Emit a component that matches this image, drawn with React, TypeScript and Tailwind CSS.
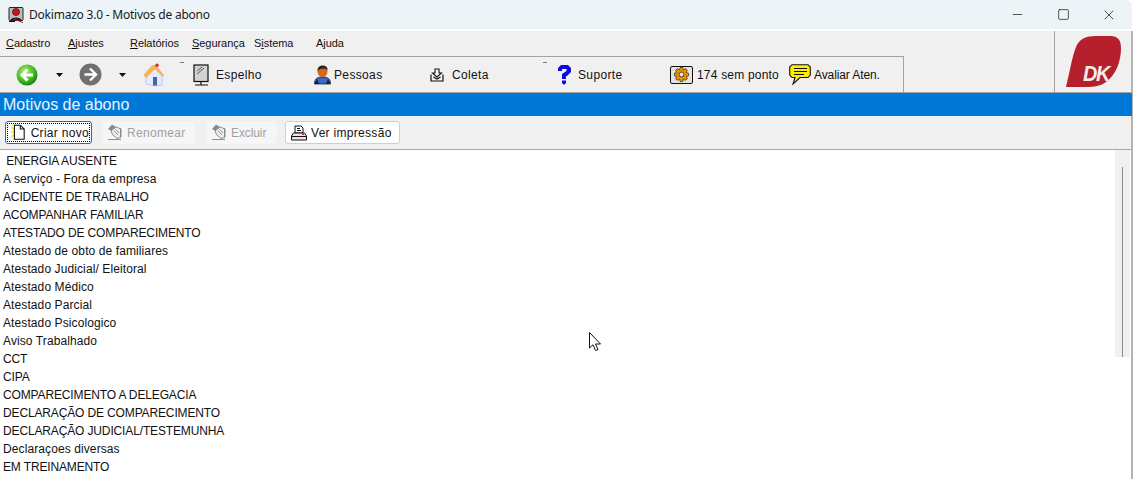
import { ReactNode } from "react";
import { Minus, Square, X } from "lucide-react";

const rows = [
  " ENERGIA AUSENTE",
  "A serviço - Fora da empresa",
  "ACIDENTE DE TRABALHO",
  "ACOMPANHAR FAMILIAR",
  "ATESTADO DE COMPARECIMENTO",
  "Atestado de obto de familiares",
  "Atestado Judicial/ Eleitoral",
  "Atestado Médico",
  "Atestado Parcial",
  "Atestado Psicologico",
  "Aviso Trabalhado",
  "CCT",
  "CIPA",
  "COMPARECIMENTO A DELEGACIA",
  "DECLARAÇÃO DE COMPARECIMENTO",
  "DECLARAÇÃO JUDICIAL/TESTEMUNHA",
  "Declaraçoes diversas",
  "EM TREINAMENTO",
];

const BackIcon = () => (
  <svg width="22" height="22" viewBox="0 0 22 22">
    <defs>
      <radialGradient id="grn" cx="40%" cy="35%" r="70%">
        <stop offset="0%" stopColor="#b4f07a" />
        <stop offset="60%" stopColor="#45bd20" />
        <stop offset="100%" stopColor="#127a10" />
      </radialGradient>
    </defs>
    <circle cx="11" cy="11" r="10.5" fill="url(#grn)" />
    <path d="M11.5 5.5 L6 11 L11.5 16.5 M6.5 11 H17" fill="none" stroke="#fff" strokeWidth="3" />
  </svg>
);

const ForwardIcon = () => (
  <svg width="23" height="23" viewBox="0 0 23 23">
    <circle cx="11.5" cy="11.5" r="11" fill="#717171" />
    <path d="M11 5.5 L17 11.5 L11 17.5 M17 11.5 H5.5" fill="none" stroke="#fff" strokeWidth="2.4" />
  </svg>
);

const Caret = () => (
  <svg width="7" height="4" viewBox="0 0 7 4">
    <path d="M0 0 H7 L3.5 4 Z" fill="#111" />
  </svg>
);

const HomeIcon = () => (
  <svg width="22" height="24" viewBox="0 0 22 24">
    <path d="M3 12 L11 5 L19 12 V22 L11 23 L3 21 Z" fill="#e4ecfb" stroke="#a9c3ea" strokeWidth="0.8" />
    <path d="M10 14 H14 V22.5 H10 Z" fill="#3f66a8" />
    <path d="M0.5 12 L9 2.5 L13 2 L21.5 13 L19.5 13.5 L12 6 L3 15 Z" fill="#f7b056" />
    <circle cx="14" cy="2.2" r="1.8" fill="#c8372c" />
  </svg>
);

const MirrorIcon = () => (
  <svg width="17" height="22" viewBox="0 0 17 22">
    <rect x="1" y="1" width="14" height="16.5" fill="#d2d2d2" stroke="#111" strokeWidth="1.2" />
    <path d="M4 7 L9 3 M4 10 L11 4" stroke="#555" strokeWidth="1" />
    <path d="M8 18 V20.5 M2 21 H15" stroke="#111" strokeWidth="1.2" />
  </svg>
);

const PersonIcon = () => (
  <svg width="17" height="21" viewBox="0 0 17 21">
    <path d="M0.5 20 C0.5 14 4 13 8.5 13 C13 13 16.5 14 16.5 20 Z" fill="#3768c8" stroke="#10213f" strokeWidth="0.8" />
    <ellipse cx="8.5" cy="7.5" rx="5" ry="5.5" fill="#d9641e" />
    <path d="M3.5 7 C3 0 14 0 13.5 6 C10 4 7 4 3.5 7 Z" fill="#2a2522" />
    <path d="M3 15 L0.5 20 H5 Z M14 15 L16.5 20 H12 Z" fill="#10213f" />
  </svg>
);

const InboxIcon = () => (
  <svg width="14" height="14" viewBox="0 0 14 14">
    <path d="M5 1 H9 V5 H11.5 L7 9 L2.5 5 H5 Z" fill="#fff" stroke="#111" strokeWidth="1.1" />
    <path d="M1 6.5 V13 H13 V6.5" fill="none" stroke="#111" strokeWidth="1.2" />
    <path d="M3.5 9 L7 11 L10.5 9" fill="none" stroke="#111" strokeWidth="1.2" />
  </svg>
);

const QuestionIcon = () => (
  <svg width="15" height="21" viewBox="0 0 15 21">
    <path
      d="M1 4 L4 1 H11 L14 4 V8 L10 12 H9 V15 H5 V10 L9.5 7 V5 H5 V7 H1 Z M5 16.5 H9 V19 L7.5 20.5 H6.5 L5 19 Z"
      fill="#0a0adf"
    />
  </svg>
);

const GearIcon = () => (
  <div className="w-[23px] h-[18px] border border-[#111] rounded-[2px] bg-[#e4e4e4] flex items-center justify-center">
    <svg width="15" height="15" viewBox="0 0 16 16">
      <path
        d="M6.5 0.5 H9.5 L10 3 L12.5 1.8 L14.2 3.5 L13 6 L15.5 6.5 V9.5 L13 10 L14.2 12.5 L12.5 14.2 L10 13 L9.5 15.5 H6.5 L6 13 L3.5 14.2 L1.8 12.5 L3 10 L0.5 9.5 V6.5 L3 6 L1.8 3.5 L3.5 1.8 L6 3 Z"
        fill="#e8930c"
        stroke="#4a3000"
        strokeWidth="0.8"
      />
      <circle cx="8" cy="8" r="2.6" fill="#e4e4e4" stroke="#4a3000" strokeWidth="0.9" />
    </svg>
  </div>
);

const BalloonIcon = () => (
  <svg width="22" height="21" viewBox="0 0 22 21">
    <path
      d="M3 0.7 H19 L21.3 3 V11 L19 13.5 H11 L4 20 L6 13.5 H3 L0.7 11 V3 Z"
      fill="#ffee00"
      stroke="#111"
      strokeWidth="1.1"
    />
    <path d="M5 4.5 H18 M5 7.5 H18 M5 10.5 H15" stroke="#111" strokeWidth="1" />
  </svg>
);

const NewIcon = () => (
  <svg width="15" height="17" viewBox="0 0 15 17">
    <path d="M0 3 L3 5 M0 13 L3 11 M0 8 H3 M3 0 L5 3 M3 16 L5 13" stroke="#f5ee00" strokeWidth="1.6" />
    <path d="M3.5 1 H9.5 L13.5 5 V15.5 H3.5 Z" fill="#fff" stroke="#111" strokeWidth="1.1" />
    <path d="M9.5 1 V5 H13.5" fill="none" stroke="#111" strokeWidth="1.1" />
  </svg>
);

const HandIcon = () => (
  <svg width="16" height="17" viewBox="0 0 16 17">
    <path d="M1 5 L5 0.5 L9 3 L5.5 8 Z" fill="#8c8c8c" />
    <path d="M4.5 6.5 L9 3 L14 5 V13 L10 14.5 L5 10 Z" fill="#efefef" stroke="#8c8c8c" strokeWidth="1" />
    <path d="M7 7 L11 11 M9 5.5 L12 9 M13.5 4 V14" stroke="#8c8c8c" strokeWidth="1" />
    <path d="M1 15.5 H14" stroke="#8c8c8c" strokeWidth="1" />
  </svg>
);

const PrinterIcon = () => (
  <svg width="16" height="16" viewBox="0 0 16 16">
    <path d="M4 1 H10 L12 3 V8 H4 Z" fill="#fff" stroke="#111" strokeWidth="1" />
    <path d="M6 3.5 H9 M6 5.5 H10" stroke="#111" strokeWidth="1" />
    <path d="M2.5 8 H13.5 L15.5 11 V15 H0.5 V11 Z" fill="#e6e6e6" stroke="#111" strokeWidth="1" />
    <path d="M1 11.5 H15" stroke="#111" strokeWidth="1" />
    <path d="M11 9.5 H13" stroke="#d02020" strokeWidth="1" />
  </svg>
);

const ToolItem = ({ icon, label, width, gap }: { icon: ReactNode; label?: string; width: string; gap: string }) => (
  <div className={`flex items-center shrink-0 ${width} ${gap}`}>
    {icon}
    {label && <span className="whitespace-nowrap">{label}</span>}
  </div>
);

const Grip = ({ width }: { width: string }) => (
  <div className={`shrink-0 self-stretch ${width} flex justify-end`}>
    <div className="w-[4px] h-px bg-[#777] mt-[5px]" />
  </div>
);

const Btn = ({
  icon,
  label,
  width,
  disabled,
  focused,
}: {
  icon: ReactNode;
  label: string;
  width: string;
  disabled?: boolean;
  focused?: boolean;
}) => {
  if (focused) {
    return (
      <div className={`h-[23px] ${width} shrink-0 rounded-[3px] border border-[#0078d7] bg-white p-px`}>
        <div className="h-full border border-dotted border-black flex items-center gap-[5px] pl-[3px] text-[#111] whitespace-nowrap">
          {icon}
          <span>{label}</span>
        </div>
      </div>
    );
  }
  return (
    <div
      className={`h-[23px] ${width} shrink-0 rounded-[3px] border flex items-center whitespace-nowrap ${
        disabled
          ? "gap-[4px] pl-[4px] border-[#f5f5f5] bg-[#f6f6f6] text-[#a0a0a0]"
          : "gap-[4px] pl-[5px] border-[#cfcfcf] bg-white text-[#111]"
      }`}
    >
      {icon}
      <span>{label}</span>
    </div>
  );
};

export default function App() {
  return (
    <div className="w-[1134px] h-[479px] overflow-hidden bg-white flex flex-col font-['Liberation_Sans',Arial,sans-serif] text-[12px] text-[#111] tracking-[0.1px]">
      {/* barra de titulo */}
      <div className="h-[29px] w-[1132px] shrink-0 bg-[#edf4f8] rounded-tr-[6px] flex items-center pl-[8px]">
        <svg width="16" height="16" viewBox="0 0 16 16" className="mr-[5px]">
          <rect x="1" y="0.5" width="14" height="13" rx="1" fill="#bdbdbd" stroke="#222" />
          <circle cx="8" cy="5" r="3.5" fill="#e01010" stroke="#111" strokeWidth="0.7" />
          <path d="M2.5 13 C3 9.5 13 9.5 13.5 13 Z" fill="#222" />
          <path d="M6 12 L15 15.5" stroke="#d01010" strokeWidth="1" />
          <path d="M1 14.5 H7" stroke="#111" strokeWidth="1" />
        </svg>
        <span className="font-['Noto_Sans',sans-serif] text-[12px] tracking-[-0.22px] text-[#1a1a1a]">
          Dokimazo 3.0 - Motivos de abono
        </span>
        <div className="ml-auto flex items-center text-[#222]">
          <div className="w-[46px] flex justify-center"><Minus size={15} strokeWidth={1.2} /></div>
          <div className="w-[46px] flex justify-center"><Square size={13} strokeWidth={1.4} /></div>
          <div className="w-[46px] flex justify-center"><X size={16} strokeWidth={1.2} /></div>
        </div>
      </div>
      <div className="h-[2px] shrink-0 bg-white" />

      <div className="flex-1 min-h-0 w-[1133px] flex flex-col border-r-2 border-[#b4b4b4]">
        {/* menu e barra de ferramentas */}
        <div className="flex shrink-0 h-[62px] bg-[#f0f0f0] border-b border-[#a3a3a3]">
          <div className="flex-1 flex flex-col min-w-0">
            <div className="h-[25px] flex items-center pl-[6px] text-[11px] tracking-[-0.05px]">
              <div className="w-[62px]"><u>C</u>adastro</div>
              <div className="w-[62px]"><u>A</u>justes</div>
              <div className="w-[62px]"><u>R</u>elatórios</div>
              <div className="w-[62px]"><u>S</u>egurança</div>
              <div className="w-[62px]">S<u>i</u>stema</div>
              <div className="w-[62px]">A<u>j</u>uda</div>
            </div>
            <div className="flex-1 w-[904px] border-t border-r border-[#a3a3a3] flex items-center pl-[16px] tracking-[0.35px]">
              <ToolItem icon={<BackIcon />} width="w-[40px]" gap="" />
              <ToolItem icon={<Caret />} width="w-[23px]" gap="" />
              <ToolItem icon={<ForwardIcon />} width="w-[40px]" gap="" />
              <ToolItem icon={<Caret />} width="w-[24px]" gap="" />
              <ToolItem icon={<HomeIcon />} width="w-[22px]" gap="" />
              <Grip width="w-[19px]" />
              <div className="w-[9px] shrink-0" />
              <ToolItem icon={<MirrorIcon />} label="Espelho" width="w-[121px]" gap="gap-[6px]" />
              <ToolItem icon={<PersonIcon />} label="Pessoas" width="w-[116px]" gap="gap-[3px]" />
              <ToolItem icon={<InboxIcon />} label="Coleta" width="w-[105px]" gap="gap-[8px]" />
              <Grip width="w-[12px]" />
              <div className="w-[10px] shrink-0" />
              <ToolItem icon={<QuestionIcon />} label="Suporte" width="w-[113px]" gap="gap-[6px]" />
              <div className="tracking-[0.2px]">
                <ToolItem icon={<GearIcon />} label="174 sem ponto" width="w-[119px]" gap="gap-[4px]" />
              </div>
              <div className="tracking-[-0.1px]">
                <ToolItem icon={<BalloonIcon />} label="Avaliar Aten." width="w-[100px]" gap="gap-[3px]" />
              </div>
            </div>
          </div>
          <div className="w-[77px] shrink-0 border-l border-[#a3a3a3] flex items-start pl-[11px] pt-[4px]">
            <div className="relative w-[56px] h-[52px]">
              <svg width="56" height="52" viewBox="0 0 56 52" className="absolute inset-0">
                <path
                  d="M0 52 C4 36 6 22 10 12 C13 4 20 1 30 1 L44 1 C52 1 55 5 55 13 C55 26 50 40 40 47 C35 51 28 52 20 52 Z"
                  fill="#b5202c"
                />
              </svg>
              <span className="absolute left-[17px] top-[28px] origin-left scale-x-90 font-['Liberation_Sans',sans-serif] italic font-bold text-[22px] leading-[22px] tracking-[-1.5px] text-[#f2eeee]">
                DK
              </span>
            </div>
          </div>
        </div>

        {/* titulo da pagina */}
        <div className="h-[23px] shrink-0 mr-[-1px] bg-[#0078d7] flex items-center pl-[3px] text-[16px] tracking-normal text-[#e8f4ff]">
          Motivos de abono
        </div>

        {/* botoes */}
        <div className="h-[33px] shrink-0 bg-[#f0f0f0] flex items-center pl-[5px] tracking-[0.3px]">
          <Btn icon={<NewIcon />} label="Criar novo" width="w-[87px]" focused />
          <div className="w-[10px] shrink-0" />
          <Btn icon={<HandIcon />} label="Renomear" width="w-[93px]" disabled />
          <div className="w-[11px] shrink-0" />
          <div className="tracking-[-0.1px]">
            <Btn icon={<HandIcon />} label="Excluir" width="w-[71px]" disabled />
          </div>
          <div className="w-[8px] shrink-0" />
          <Btn icon={<PrinterIcon />} label="Ver impressão" width="w-[115px]" />
        </div>

        {/* lista */}
        <div className="flex-1 min-h-0 flex border-t border-[#a8a8a8]">
          <div className="flex-1 min-w-0 overflow-hidden pt-[2px]">
            {rows.map((r) => (
              <div
                key={r}
                className={`h-[18px] leading-[18px] pl-[3px] whitespace-pre ${
                  r === r.toUpperCase() ? "tracking-[-0.14px]" : ""
                }`}
              >
                {r}
              </div>
            ))}
          </div>
          <div className="w-[15px] shrink-0 h-[207px] bg-[#f0f0f0] flex justify-center pt-[17px] mr-px">
            <div className="w-px h-full bg-[#8a8a8a]" />
          </div>
        </div>
      </div>

      {/* ponteiro do mouse */}
      <svg width="13" height="20" viewBox="0 0 13 20" className="absolute left-[589px] top-[332px]">
        <path d="M0.5 0.5 V16 L4 12.8 L6.5 18.5 L9 17.5 L6.5 12 H11.5 Z" fill="#fff" stroke="#111" strokeWidth="1" />
      </svg>
    </div>
  );
}
